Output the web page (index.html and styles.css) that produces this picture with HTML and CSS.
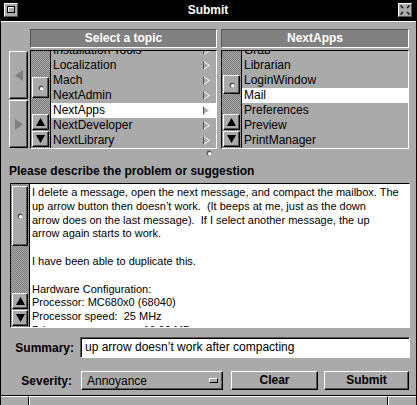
FILE: index.html
```html
<!DOCTYPE html>
<html>
<head>
<meta charset="utf-8">
<link rel="stylesheet" href="styles.css">
</head>
<body>
<div class="window">
  <div class="titlebar">
    <div class="tbtn"><svg width="12" height="12" viewBox="0 0 12 12"><rect x="2.5" y="2.5" width="7" height="6" fill="#aaa" stroke="#000"/><path d="M3.5 7.5V3.5H8.5" fill="none" stroke="#fff"/></svg></div>
    <div class="title">Submit</div>
    <div class="tbtn"><svg width="12" height="12" viewBox="0 0 12 12"><path d="M1.5 1.5L4 4M10.5 1.5L8 4M1.5 10.5L4 8M10.5 10.5L8 8" stroke="#000" stroke-width="1.2"/></svg></div>
  </div>
  <div class="content">
    <div class="headers">
      <div class="colhead">Select a topic</div>
      <div class="colhead wide">NextApps</div>
    </div>
    <div class="browser">
      <div class="navbtns">
        <div class="navbtn raised"><svg width="8" height="11" viewBox="0 0 8 11"><path d="M8 0V11L0 5.5Z" fill="#808080"/></svg></div>
        <div class="navbtn raised"><svg width="8" height="11" viewBox="0 0 8 11"><path d="M0 0V11L8 5.5Z" fill="#808080"/></svg></div>
      </div>
      <div class="column">
        <div class="scroller">
          <div class="knob raised k1"><svg width="6" height="6" viewBox="0 0 6 6"><circle cx="3" cy="3" r="2.5" fill="#555"/><circle cx="3.7" cy="3.7" r="1.8" fill="#fff"/></svg></div>
          <div class="fill"></div>
          <div class="arrowbtn raised"><svg width="9" height="8" viewBox="0 0 9 8"><path d="M0 8L4.5 0L9 8Z"/></svg></div>
          <div class="arrowbtn raised"><svg width="9" height="8" viewBox="0 0 9 8"><path d="M0 0L4.5 8L9 0Z"/></svg></div>
        </div>
        <div class="list">
          <div class="items">
            <div class="item">Installation Tools<svg class="branch" width="7" height="9" viewBox="0 0 7 9"><path d="M0.5 0.5L6.5 4.5L0.5 8.5Z" fill="#aaa" stroke="#fff"/><path d="M0.5 0.5V8.5" stroke="#555"/></svg></div>
            <div class="item">Localization<svg class="branch" width="7" height="9" viewBox="0 0 7 9"><path d="M0.5 0.5L6.5 4.5L0.5 8.5Z" fill="#aaa" stroke="#fff"/><path d="M0.5 0.5V8.5" stroke="#555"/></svg></div>
            <div class="item">Mach<svg class="branch" width="7" height="9" viewBox="0 0 7 9"><path d="M0.5 0.5L6.5 4.5L0.5 8.5Z" fill="#aaa" stroke="#fff"/><path d="M0.5 0.5V8.5" stroke="#555"/></svg></div>
            <div class="item">NextAdmin<svg class="branch" width="7" height="9" viewBox="0 0 7 9"><path d="M0.5 0.5L6.5 4.5L0.5 8.5Z" fill="#aaa" stroke="#fff"/><path d="M0.5 0.5V8.5" stroke="#555"/></svg></div>
            <div class="item sel">NextApps<svg class="branch" width="7" height="9" viewBox="0 0 7 9"><path d="M0.5 0.5L6.5 4.5L0.5 8.5Z" fill="#aaa" stroke="#fff"/><path d="M0.5 0.5V8.5" stroke="#555"/></svg></div>
            <div class="item">NextDeveloper<svg class="branch" width="7" height="9" viewBox="0 0 7 9"><path d="M0.5 0.5L6.5 4.5L0.5 8.5Z" fill="#aaa" stroke="#fff"/><path d="M0.5 0.5V8.5" stroke="#555"/></svg></div>
            <div class="item">NextLibrary<svg class="branch" width="7" height="9" viewBox="0 0 7 9"><path d="M0.5 0.5L6.5 4.5L0.5 8.5Z" fill="#aaa" stroke="#fff"/><path d="M0.5 0.5V8.5" stroke="#555"/></svg></div>
          </div>
        </div>
      </div>
      <div class="column wide">
        <div class="scroller">
          <div class="knob raised k2"><svg width="6" height="6" viewBox="0 0 6 6"><circle cx="3" cy="3" r="2.5" fill="#555"/><circle cx="3.7" cy="3.7" r="1.8" fill="#fff"/></svg></div>
          <div class="fill"></div>
          <div class="arrowbtn raised"><svg width="9" height="8" viewBox="0 0 9 8"><path d="M0 8L4.5 0L9 8Z"/></svg></div>
          <div class="arrowbtn raised"><svg width="9" height="8" viewBox="0 0 9 8"><path d="M0 0L4.5 8L9 0Z"/></svg></div>
        </div>
        <div class="list">
          <div class="items">
            <div class="item">Grab</div>
            <div class="item">Librarian</div>
            <div class="item">LoginWindow</div>
            <div class="item sel">Mail</div>
            <div class="item">Preferences</div>
            <div class="item">Preview</div>
            <div class="item">PrintManager</div>
          </div>
        </div>
      </div>
    </div>
    <div class="divider"><svg width="6" height="6" viewBox="0 0 6 6"><circle cx="3" cy="3" r="2.5" fill="#555"/><circle cx="3.7" cy="3.7" r="1.8" fill="#fff"/></svg></div>
    <div class="label">Please describe the problem or suggestion</div>
    <div class="textbox">
      <div class="scroller tscroller">
        <div class="knob raised k3"><svg width="6" height="6" viewBox="0 0 6 6"><circle cx="3" cy="3" r="2.5" fill="#555"/><circle cx="3.7" cy="3.7" r="1.8" fill="#fff"/></svg></div>
        <div class="fill"></div>
        <div class="arrowbtn raised"><svg width="9" height="8" viewBox="0 0 9 8"><path d="M0 8L4.5 0L9 8Z"/></svg></div>
        <div class="arrowbtn raised"><svg width="9" height="8" viewBox="0 0 9 8"><path d="M0 0L4.5 8L9 0Z"/></svg></div>
      </div>
      <div class="text">
        <div class="line">I delete a message, open the next message, and compact the mailbox. The</div>
        <div class="line">up arrow button then doesn’t work.&nbsp; (It beeps at me, just as the down</div>
        <div class="line">arrow does on the last message).&nbsp; If I select another message, the up</div>
        <div class="line">arrow again starts to work.</div>
        <div class="line">&nbsp;</div>
        <div class="line">I have been able to duplicate this.</div>
        <div class="line">&nbsp;</div>
        <div class="line">Hardware Configuration:</div>
        <div class="line">Processor: MC680x0 (68040)</div>
        <div class="line">Processor speed:&nbsp; 25 MHz</div>
        <div class="line">Primary memory:&nbsp;&nbsp;&nbsp;&nbsp;&nbsp;&nbsp;&nbsp;&nbsp; 16.00 MB</div>
      </div>
    </div>
    <div class="row summary">
      <div class="flabel sumlabel">Summary:</div>
      <div class="field">up arrow doesn’t work after compacting</div>
    </div>
    <div class="row severity">
      <div class="flabel sevlabel">Severity:</div>
      <div class="popup raised"><span>Annoyance</span><span class="pind"></span></div>
      <div class="button raised clear">Clear</div>
      <div class="button raised submit">Submit</div>
    </div>
  </div>
  <div class="resizebar">
    <div class="seg left"></div>
    <div class="seg mid"></div>
    <div class="seg right"></div>
  </div>
</div>
</body>
</html>
```

FILE: styles.css
```css
* { box-sizing: border-box; }
html, body { margin: 0; padding: 0; background: #aaaaaa; }
body {
  font-family: "Liberation Sans", Arial, sans-serif;
  font-size: 12px;
  color: #000;
}
.window {
  width: 417px;
  height: 405px;
  border-left: 1px solid #000;
  border-right: 1px solid #000;
  background: #aaaaaa;
  display: flex;
  flex-direction: column;
  overflow: hidden;
}
.titlebar {
  height: 21px;
  flex: none;
  background: #000;
  display: flex;
  align-items: flex-start;
  padding: 3px 4px 0 3px;
}
.tbtn {
  width: 14px;
  height: 14px;
  flex: none;
  background: #aaaaaa;
  border: 1px solid;
  border-color: #fff #555 #555 #fff;
  display: flex;
}
.title {
  flex: 1;
  text-align: center;
  color: #fff;
  font-weight: bold;
  line-height: 15px;
}
.content {
  flex: none;
  border-top: 1px solid #fff;
  padding: 0 6px 5px 7px;
  display: flex;
  flex-direction: column;
}
.raised {
  border: 1px solid;
  border-color: #fff #000 #000 #fff;
  box-shadow: inset -1px -1px 0 #555;
  background: #aaaaaa;
}
.headers {
  margin-top: 7px;
  height: 19px;
  display: flex;
  gap: 4px;
  padding-left: 22px;
}
.colhead {
  width: 187px;
  background: #808080;
  border: 1px solid;
  border-color: #555 #fff #fff #555;
  color: #fff;
  font-weight: bold;
  text-align: center;
  line-height: 17px;
}
.colhead.wide { width: 188px; }
.browser {
  margin-top: 2px;
  height: 99px;
  display: flex;
}
.navbtns {
  width: 19px;
  margin: 0 2px 0 1px;
  padding-top: 1px;
  display: flex;
  flex-direction: column;
  gap: 1px;
}
.navbtn {
  height: 48px;
  display: flex;
  align-items: center;
  justify-content: center;
}
.column {
  width: 187px;
  border: 1px solid;
  border-color: #000 #fff #fff #000;
  display: flex;
  background: #aaaaaa;
}
.column.wide { width: 188px; margin-left: 4px; }
.scroller {
  width: 20px;
  flex: none;
  border-right: 1px solid #000;
  padding: 0 1px 1px 1px;
  display: flex;
  flex-direction: column;
  background-color: #aaaaaa;
  background-image: conic-gradient(#7a7a7a 25%, #aaaaaa 0 50%, #7a7a7a 0 75%, #aaaaaa 0);
  background-size: 2px 2px;
}
.knob {
  display: flex;
  align-items: center;
  justify-content: center;
  flex: none;
}
.k1 { margin-top: 26px; height: 21px; }
.k2 { margin-top: 24px; height: 19px; }
.k3 { margin-top: 2px; height: 60px; }
.fill { flex: 1; }
.arrowbtn {
  height: 16px;
  flex: none;
  margin-top: 1px;
  display: flex;
  align-items: center;
  justify-content: center;
}
.list {
  flex: 1;
  overflow: hidden;
}
.items { margin-top: -8px; }
.item {
  height: 15px;
  line-height: 15px;
  padding: 0 6px 0 2px;
  display: flex;
  justify-content: space-between;
  align-items: center;
  white-space: nowrap;
}
.item.sel { background: #fff; }
.branch { flex: none; }
.divider {
  height: 7px;
  display: flex;
  justify-content: center;
  align-items: flex-start;
  padding-top: 1px;
}
.label {
  margin-top: 8px;
  line-height: 14px;
  font-weight: bold;
  padding-left: 1px;
}
.textbox {
  margin-top: 5px;
  margin-left: 2px;
  height: 145px;
  display: flex;
  border: 1px solid;
  border-color: #000 #fff #fff #000;
}
.tscroller { width: 19px; }
.text {
  flex: 1;
  background: #fff;
  padding: 2px 0 0 2px;
  font-size: 11px;
  line-height: 13.8px;
  overflow: hidden;
  white-space: nowrap;
}
.row {
  display: flex;
  align-items: center;
}
.summary { margin-top: 9px; height: 21px; }
.severity { margin-top: 13px; height: 19px; }
.flabel {
  font-weight: bold;
  text-align: right;
  flex: none;
}
.sumlabel { width: 66px; }
.sevlabel { width: 64px; }
.field {
  margin-left: 6px;
  flex: 1;
  height: 21px;
  background: #fff;
  border: 1px solid;
  border-color: #555 #fff #fff #555;
  box-shadow: inset 1px 1px 0 #000;
  padding-left: 4px;
  line-height: 19px;
  white-space: nowrap;
}
.popup {
  margin-left: 9px;
  width: 142px;
  height: 19px;
  display: flex;
  align-items: center;
  justify-content: space-between;
  padding: 0 4px 0 5px;
}
.pind {
  width: 9px;
  height: 5px;
  border: 1px solid;
  border-color: #fff #000 #000 #fff;
  background: #aaaaaa;
}
.button {
  height: 19px;
  font-weight: bold;
  text-align: center;
  line-height: 17px;
}
.clear { margin-left: 8px; width: 87px; }
.submit { margin-left: 6px; width: 85px; }
.resizebar {
  flex: 1;
  border-top: 1px solid #000;
  display: flex;
}
.seg { border-top: 1px solid #fff; }
.seg.left { width: 28px; border-right: 1px solid #000; }
.seg.mid { flex: 1; border-left: 1px solid #fff; border-right: 1px solid #000; }
.seg.right { width: 28px; border-left: 1px solid #fff; }
```
